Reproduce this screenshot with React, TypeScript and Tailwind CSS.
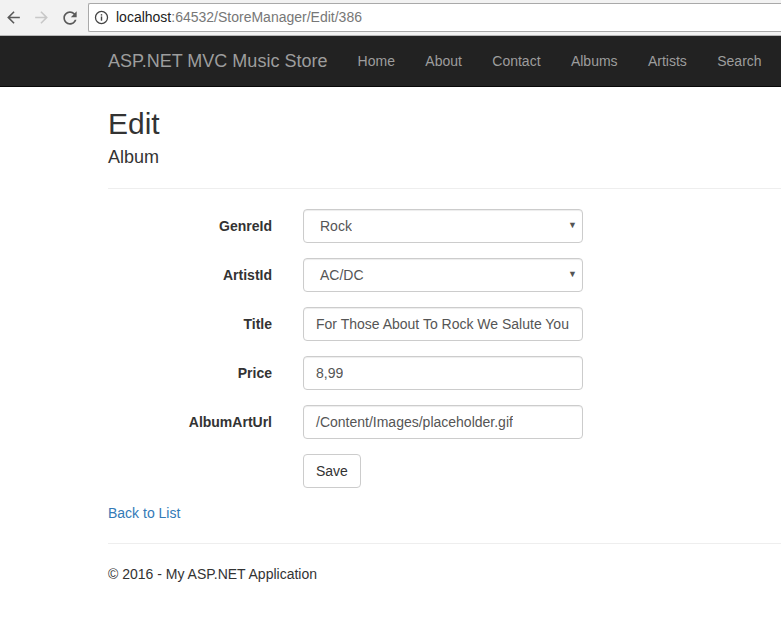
import React from "react";

const font = { fontFamily: '"Liberation Sans", Arial, sans-serif' };

function Field({ label, value, select }: { label: string; value: string; select?: boolean }) {
  return (
    <div className="flex items-center mb-[15px]">
      <div className="w-[164px] text-right font-bold text-[14px] text-[#333]">{label}</div>
      <div className="ml-[31px] w-[280px] h-[34px] border border-[#ccc] rounded-[4px] bg-white flex items-center justify-between shadow-[inset_0_1px_1px_rgba(0,0,0,0.075)]">
        <span className={`${select ? "pl-[16px]" : "pl-[12px]"} text-[14px] text-[#555] whitespace-nowrap overflow-hidden`}>{value}</span>
        {select && <span className="pr-[5px] text-[9px] text-[#555]">▼</span>}
      </div>
    </div>
  );
}

export default function App() {
  return (
    <div className="w-[781px] h-[637px] bg-white overflow-hidden" style={font}>
      {/* browser chrome */}
      <div className="h-[36px] bg-[#f2f2f2] border-b border-[#b8b8b8] flex items-center">
        <div className="flex items-center w-[88px] pl-[4px] gap-[9px]">
          <svg width="19" height="19" viewBox="0 0 24 24"><path fill="#5a5a5a" d="M20 11H7.83l5.59-5.59L12 4l-8 8 8 8 1.41-1.41L7.83 13H20v-2z" /></svg>
          <svg width="19" height="19" viewBox="0 0 24 24"><path fill="#c8c8c8" d="M4 11h12.17l-5.59-5.59L12 4l8 8-8 8-1.41-1.41L16.17 13H4v-2z" /></svg>
          <svg width="20" height="20" viewBox="0 0 24 24"><path fill="#5a5a5a" d="M17.65 6.35C16.2 4.9 14.21 4 12 4c-4.42 0-7.99 3.58-7.99 8s3.57 8 7.99 8c3.73 0 6.840-2.55 7.73-6h-2.08c-.82 2.33-3.04 4-5.65 4-3.31 0-6-2.690-6-6s2.69-6 6-6c1.66 0 3.14.69 4.22 1.78L13 11h7V4l-2.35 2.35z" /></svg>
        </div>
        <div className="flex-1 h-[29px] bg-white border border-[#a9a9a9] border-r-0 rounded-l-[2px] flex items-center">
          <svg className="ml-[4px]" width="17" height="17" viewBox="0 0 24 24">
            <circle cx="12" cy="12" r="8.5" fill="none" stroke="#444" strokeWidth="1.8" />
            <rect x="11" y="10.5" width="2" height="6" fill="#444" />
            <rect x="11" y="7.3" width="2" height="2" fill="#444" />
          </svg>
          <span className="ml-[6px] text-[14px] text-[#222]">localhost<span className="text-[#777]">:64532/StoreManager/Edit/386</span></span>
        </div>
      </div>

      {/* navbar */}
      <div className="h-[51px] bg-[#222] border-b border-[#080808] flex items-center pl-[108px]">
        <span className="text-[18px] text-[#9d9d9d]">ASP.NET MVC Music Store</span>
        <div className="flex ml-[15px]">
          {["Home", "About", "Contact", "Albums", "Artists", "Search"].map((l) => (
            <span key={l} className="px-[15.2px] text-[14px] text-[#9d9d9d]">{l}</span>
          ))}
        </div>
      </div>

      {/* body */}
      <div className="pl-[108px] text-[#333]">
        <h2 className="mt-[20px] text-[30px] leading-[33px]">Edit</h2>
        <h4 className="mt-[7px] text-[18px] leading-[20px]">Album</h4>
        <div className="mt-[21px] border-t border-[#eee]" />
        <div className="mt-[20px]">
          <Field label="GenreId" value="Rock" select />
          <Field label="ArtistId" value="AC/DC" select />
          <Field label="Title" value="For Those About To Rock We Salute You" />
          <Field label="Price" value="8,99" />
          <Field label="AlbumArtUrl" value="/Content/Images/placeholder.gif" />
          <div className="flex mb-[15px]">
            <div className="ml-[195px] h-[34px] px-[12px] border border-[#ccc] rounded-[4px] bg-white flex items-center text-[14px] text-[#333]">Save</div>
          </div>
        </div>
        <div className="text-[14px] leading-[20px] text-[#337ab7]">Back to List</div>
        <div className="mt-[20px] border-t border-[#eee]" />
        <p className="mt-[20px] text-[14px] leading-[20px]">© 2016 - My ASP.NET Application</p>
      </div>
    </div>
  );
}
